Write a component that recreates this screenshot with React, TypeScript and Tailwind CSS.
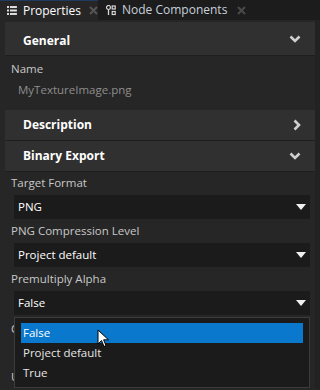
import React from 'react'

const font = { fontFamily: '"Open Sans", "Noto Sans", sans-serif' }

function ChevronDown() {
  return (
    <svg width="12" height="8" viewBox="0 0 12 8">
      <polyline points="1.5,1.5 6,6 10.5,1.5" fill="none" stroke="#cfcfcf" strokeWidth="2.6" />
    </svg>
  )
}

function ChevronRight() {
  return (
    <svg width="8" height="12" viewBox="0 0 8 12">
      <polyline points="1.5,1.5 6,6 1.5,10.5" fill="none" stroke="#cfcfcf" strokeWidth="2.6" />
    </svg>
  )
}

function Triangle() {
  return (
    <svg width="10" height="6" viewBox="0 0 10 6">
      <polygon points="0,0 10,0 5,6" fill="#f0f0f0" />
    </svg>
  )
}

function CloseX({ color }: { color: string }) {
  return (
    <svg width="9" height="9" viewBox="0 0 9 9">
      <path d="M1 1 L8 8 M8 1 L1 8" stroke={color} strokeWidth="2" />
    </svg>
  )
}

function Header({ title, open }: { title: string; open: boolean }) {
  return (
    <div className="flex items-center justify-between h-[30px] bg-[#303030] pl-[18px] pr-[14px]">
      <span className="text-[12px] font-bold text-white">{title}</span>
      {open ? <ChevronDown /> : <ChevronRight />}
    </div>
  )
}

function Field({ label, value }: { label: string; value: string }) {
  return (
    <div className="flex flex-col">
      <div className="h-[24px] pl-[6px] flex items-center text-[11.5px] text-[#c8c8c8]">{label}</div>
      <div className="ml-[9px] mr-[5px] h-[24px] bg-[#1b1b1b] flex items-center justify-between pl-[4px] pr-[4px]">
        <span className="text-[11.5px] text-white">{value}</span>
        <Triangle />
      </div>
    </div>
  )
}

export default function App() {
  return (
    <div className="relative w-[320px] h-[390px] overflow-hidden bg-[#262626]" style={font}>
      {/* tab strip */}
      <div className="flex h-[20px] bg-[#1c1c1c]">
        <div className="flex items-center w-[98px] bg-[#262626] border-t border-[#1f3a5f] pl-[7px]">
          <svg width="10" height="9" viewBox="0 0 10 9">
            <rect x="0" y="0" width="2" height="2" fill="#e0e0e0" />
            <rect x="3" y="0" width="7" height="2" fill="#e0e0e0" />
            <rect x="0" y="3.5" width="2" height="2" fill="#e0e0e0" />
            <rect x="3" y="3.5" width="7" height="2" fill="#e0e0e0" />
            <rect x="0" y="7" width="2" height="2" fill="#e0e0e0" />
            <rect x="3" y="7" width="7" height="2" fill="#e0e0e0" />
          </svg>
          <span className="ml-[6px] text-[12px] text-white">Properties</span>
          <span className="ml-[8px] flex"><CloseX color="#555555" /></span>
        </div>
        <div className="flex items-center pl-[8px]">
          <svg width="10" height="11" viewBox="0 0 10 11">
            <circle cx="2.5" cy="2.5" r="2" fill="none" stroke="#d8d8d8" strokeWidth="1.2" />
            <path d="M2.5 4.5 V10" stroke="#d8d8d8" strokeWidth="1.3" />
            <rect x="6.2" y="1" width="3" height="3" fill="none" stroke="#d8d8d8" strokeWidth="1.2" />
            <rect x="6.2" y="6.5" width="3" height="3" fill="none" stroke="#d8d8d8" strokeWidth="1.2" />
          </svg>
          <span className="ml-[6px] text-[12px] text-[#c8d0dc]">Node Components</span>
          <span className="ml-[10px] flex"><CloseX color="#4a4a4a" /></span>
        </div>
      </div>

      <div className="flex">
        <div className="flex-1 flex flex-col pl-[5px] pt-[2px]">
          <div className="border-b border-[#1e1e1e]">
            <div className="h-[33px] bg-[#303030] flex items-center justify-between pl-[18px] pr-[14px]">
              <span className="text-[12px] font-bold text-white pt-[5px]">General</span>
              <ChevronDown />
            </div>
          </div>
          <div className="h-[20px] pl-[6px] mt-[3px] flex items-center text-[11.5px] text-[#c8c8c8]">Name</div>
          <div className="h-[22px] pl-[13px] flex items-center text-[11.5px] text-[#8e8e8e]">MyTextureImage.png</div>
          <div className="mt-[9px] border-b border-[#1e1e1e]">
            <Header title="Description" open={false} />
          </div>
          <div className="border-b border-[#1e1e1e]">
            <Header title="Binary Export" open={true} />
          </div>
          <div className="flex flex-col mt-[-1px]">
            <Field label="Target Format" value="PNG" />
            <Field label="PNG Compression Level" value="Project default" />
            <Field label="Premultiply Alpha" value="False" />
            <div className="h-[24px] pl-[6px] mt-[2px] flex items-center text-[11.5px] text-[#c8c8c8]">Color Space</div>
            <div className="ml-[9px] mr-[5px] h-[24px] bg-[#1b1b1b]" />
            <div className="h-[24px] pl-[6px] flex items-center text-[11.5px] text-[#c8c8c8]">Use Mipmaps</div>
          </div>
        </div>
        <div className="w-[5px] bg-[#222222]" />
      </div>

      {/* dropdown popup */}
      <div className="absolute left-[14px] top-[317px] w-[296px] h-[71px] bg-[#1b1b1b] border border-[#3c3c3c] px-[6px] pt-[5px]">
        <div className="h-[20px] bg-[#0a78cc] flex items-center pl-[2px] text-[11.5px] text-white">False</div>
        <div className="h-[20px] flex items-center pl-[2px] text-[11.5px] text-[#e6e6e6]">Project default</div>
        <div className="h-[20px] flex items-center pl-[2px] text-[11.5px] text-[#e6e6e6]">True</div>
      </div>

      {/* mouse pointer */}
      <svg className="absolute left-[97px] top-[329px]" width="13" height="20" viewBox="0 0 13 20">
        <path d="M1 1 L1 15 L4.5 11.5 L7 17.5 L9 16.6 L6.6 10.8 L11.5 10.8 Z" fill="#ffffff" stroke="#000000" strokeWidth="1" />
      </svg>
    </div>
  )
}
